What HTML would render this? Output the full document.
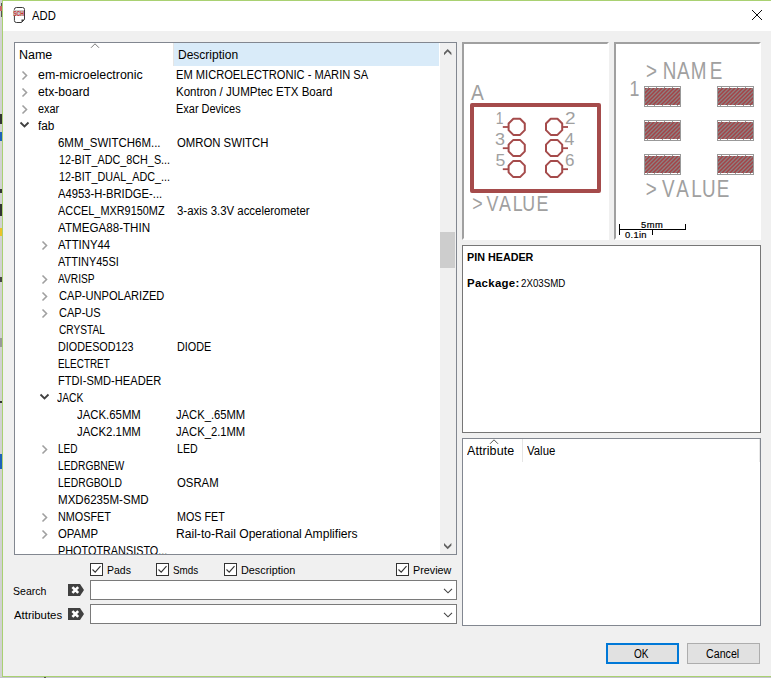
<!DOCTYPE html>
<html><head><meta charset="utf-8"><title>ADD</title>
<style>
html,body{margin:0;padding:0}
body{width:771px;height:678px;overflow:hidden;position:relative;background:#f0f0f0;font-family:"Liberation Sans",sans-serif;color:#000}
div,span,svg{position:absolute;box-sizing:border-box}
.t{white-space:pre;line-height:16px;font-size:12px;transform-origin:0 0}
.s11{font-size:11px} .s9{font-size:9px;-webkit-text-stroke:0.2px #000} .b{font-weight:bold}
.a{display:block;overflow:visible}
#strip{left:0;top:0;width:2px;height:678px;background:#d2d2d2}
#gl{left:2px;top:0;width:1px;height:677px;background:#a9d172}
#gt{left:2px;top:0;width:769px;height:1px;background:#a9d172}
#gb{left:2px;top:676px;width:769px;height:1px;background:#a9d172}
#sh{left:0;top:677px;width:771px;height:1px;background:#c4c4cc}
#title{left:3px;top:1px;width:768px;height:30px;background:#fff}
#tree{left:14px;top:42px;width:443px;height:513px;border:1px solid #828790;background:#fff;overflow:hidden}
#hl{left:174px;top:43px;width:265px;height:23px;background:#d9ebf9}
#hsep{left:173px;top:43px;width:1px;height:23px;background:#e5e5e5}
#sb{left:440px;top:43px;width:16px;height:511px;background:#f0f0f0}
#thumb{left:440px;top:232px;width:15px;height:36px;background:#cdcdcd}
.frame{top:42px;width:147px;height:198px;background:#fff;border-top:2px solid #a0a0a0;border-left:2px solid #a0a0a0;border-right:2px solid #fff;border-bottom:2px solid #fff}
#desc{left:462px;top:245px;width:299px;height:188px;background:#fff;border:1px solid #767676}
#attr{left:462px;top:438px;width:299px;height:188px;background:#fff;border:1px solid #828790}
#asep{left:522px;top:439px;width:1px;height:23px;background:#e5e5e5}
#asep2{left:759px;top:439px;width:1px;height:23px;background:#e8e8e8}
.cb{width:13px;height:13px;border:1px solid #333;background:#fff}
.cb svg{left:0;top:0}
.combo{left:90px;width:367px;height:20px;border:1px solid #7a7a7a;background:#fff}
.btn{top:643px;width:73px;height:21px;background:#e1e1e1;border:1px solid #adadad}
#ok{left:606px;border:2px solid #0078d7}
#cancel{left:687px}
</style></head><body>
<div id="strip"></div>
<div id="title"></div>
<div id="gt"></div><div id="gl"></div><div id="gb"></div><div id="sh"></div><div style="left:44px;top:677px;width:2px;height:1px;background:#555"></div>
<svg class="a" style="left:0;top:0" width="3" height="678" viewBox="0 0 3 678">
<rect x="1" y="3" width="1" height="14" fill="#555"/><rect x="0" y="6" width="2" height="5" fill="#c66"/>
<rect x="0" y="114" width="2" height="10" fill="#333"/><rect x="0" y="132" width="2" height="9" fill="#1c62b9"/>
<rect x="0" y="189" width="2" height="4" fill="#333"/><rect x="0" y="204" width="2" height="12" fill="#333"/>
<rect x="0" y="228" width="2" height="8" fill="#ecc22a"/><rect x="0" y="277" width="2" height="5" fill="#444"/>
<rect x="0" y="338" width="2" height="9" fill="#999"/><rect x="0" y="401" width="2" height="2" fill="#333"/>
<rect x="0" y="454" width="2" height="15" fill="#1c62b9"/>
<rect x="2" y="0" width="1" height="677" fill="#a9d172"/>
</svg>
<svg class="a" style="left:12px;top:5px" width="16" height="20" viewBox="0 0 16 20">
<path d="M4.4 2.5 H10.5 Q12.5 2.5 12.5 4.5 V14.5 L9.5 17.5 H4.4 Q2.4 17.5 2.4 15.5 V4.5 Q2.4 2.5 4.4 2.5 Z" fill="#fff" stroke="#3a3a3a" stroke-width="1"/>
<path d="M12.5 14.5 H9.5 V17.5 Z" fill="#3a3a3a"/>
<rect x="1" y="5" width="11" height="6" fill="#c8c8c8"/>
<text x="1.2" y="10.7" font-family="Liberation Sans, sans-serif" font-size="7" font-weight="bold" fill="#cc3333" textLength="10.6" lengthAdjust="spacingAndGlyphs">SCH</text>
</svg>
<svg class="a" style="left:751px;top:9px" width="12" height="12" viewBox="0 0 12 12"><path d="M1 1 L11 11 M11 1 L1 11" stroke="#000" stroke-width="0.95" fill="none"/></svg>

<div id="tree"></div>
<div id="hl"></div><div id="hsep"></div>
<svg class="a" style="left:90px;top:43px" width="10" height="6" viewBox="0 0 10 6"><path d="M1 4.8 L5 0.8 L9 4.8" fill="none" stroke="#7a7a7a" stroke-width="1"/></svg>
<div id="sb"></div><div id="thumb"></div>
<svg class="a" style="left:443.7px;top:48.8px" width="8" height="7" viewBox="0 0 8 7"><path d="M3.7 0 L7.4 3.7 V6.2 L3.7 2.5 L0 6.2 V3.7 Z" fill="#606060"/></svg>
<svg class="a" style="left:443.9px;top:542.8px" width="8" height="7" viewBox="0 0 8 7"><path d="M3.7 6.2 L7.4 2.5 V0 L3.7 3.7 L0 0 V2.5 Z" fill="#606060"/></svg>
<svg class="a" style="left:20.0px;top:69.5px" width="9" height="11" viewBox="0 0 9 11"><path d="M2.5 1.5 L6.5 5.5 L2.5 9.5" fill="none" stroke="#a0a0a0" stroke-width="1.6"/></svg><svg class="a" style="left:20.0px;top:86.5px" width="9" height="11" viewBox="0 0 9 11"><path d="M2.5 1.5 L6.5 5.5 L2.5 9.5" fill="none" stroke="#a0a0a0" stroke-width="1.6"/></svg><svg class="a" style="left:20.0px;top:103.5px" width="9" height="11" viewBox="0 0 9 11"><path d="M2.5 1.5 L6.5 5.5 L2.5 9.5" fill="none" stroke="#a0a0a0" stroke-width="1.6"/></svg><svg class="a" style="left:19.0px;top:119.5px" width="11" height="9" viewBox="0 0 11 9"><path d="M1.5 2.5 L5.5 6.5 L9.5 2.5" fill="none" stroke="#404040" stroke-width="1.8"/></svg><svg class="a" style="left:40.0px;top:239.5px" width="9" height="11" viewBox="0 0 9 11"><path d="M2.5 1.5 L6.5 5.5 L2.5 9.5" fill="none" stroke="#a0a0a0" stroke-width="1.6"/></svg><svg class="a" style="left:40.0px;top:273.5px" width="9" height="11" viewBox="0 0 9 11"><path d="M2.5 1.5 L6.5 5.5 L2.5 9.5" fill="none" stroke="#a0a0a0" stroke-width="1.6"/></svg><svg class="a" style="left:40.0px;top:290.5px" width="9" height="11" viewBox="0 0 9 11"><path d="M2.5 1.5 L6.5 5.5 L2.5 9.5" fill="none" stroke="#a0a0a0" stroke-width="1.6"/></svg><svg class="a" style="left:40.0px;top:307.5px" width="9" height="11" viewBox="0 0 9 11"><path d="M2.5 1.5 L6.5 5.5 L2.5 9.5" fill="none" stroke="#a0a0a0" stroke-width="1.6"/></svg><svg class="a" style="left:39.0px;top:391.5px" width="11" height="9" viewBox="0 0 11 9"><path d="M1.5 2.5 L5.5 6.5 L9.5 2.5" fill="none" stroke="#404040" stroke-width="1.8"/></svg><svg class="a" style="left:40.0px;top:443.5px" width="9" height="11" viewBox="0 0 9 11"><path d="M2.5 1.5 L6.5 5.5 L2.5 9.5" fill="none" stroke="#a0a0a0" stroke-width="1.6"/></svg><svg class="a" style="left:40.0px;top:511.5px" width="9" height="11" viewBox="0 0 9 11"><path d="M2.5 1.5 L6.5 5.5 L2.5 9.5" fill="none" stroke="#a0a0a0" stroke-width="1.6"/></svg><svg class="a" style="left:40.0px;top:528.5px" width="9" height="11" viewBox="0 0 9 11"><path d="M2.5 1.5 L6.5 5.5 L2.5 9.5" fill="none" stroke="#a0a0a0" stroke-width="1.6"/></svg>

<div class="frame" style="left:462px"></div>
<div class="frame" style="left:614px"></div>
<svg class="a" style="left:0;top:0" width="771" height="678" viewBox="0 0 771 678">
<defs><pattern id="hatch" width="4" height="4" patternUnits="userSpaceOnUse"><rect width="4" height="4" fill="#8b8182"/><path d="M-1 1 L1 -1 M-1 5 L5 -1 M3 5 L5 3" stroke="#a54246" stroke-width="1.5"/></pattern></defs>
<rect x="472" y="105" width="127" height="86" fill="none" stroke="#a54b4b" stroke-width="4" stroke-linejoin="round"/>
<polygon points="520.06,118.70 524.80,123.44 524.80,130.16 520.06,134.90 513.34,134.90 508.60,130.16 508.60,123.44 513.34,118.70" fill="none" stroke="#a54b4b" stroke-width="2" stroke-linejoin="round"/><path d="M502.8 127.0H508" stroke="#a54b4b" stroke-width="1.8"/><polygon points="557.46,118.70 562.20,123.44 562.20,130.16 557.46,134.90 550.74,134.90 546.00,130.16 546.00,123.44 550.74,118.70" fill="none" stroke="#a54b4b" stroke-width="2" stroke-linejoin="round"/><path d="M563 127.0H568" stroke="#a54b4b" stroke-width="1.8"/><polygon points="520.06,139.90 524.80,144.64 524.80,151.36 520.06,156.10 513.34,156.10 508.60,151.36 508.60,144.64 513.34,139.90" fill="none" stroke="#a54b4b" stroke-width="2" stroke-linejoin="round"/><path d="M502.8 148.2H508" stroke="#a54b4b" stroke-width="1.8"/><polygon points="557.46,139.90 562.20,144.64 562.20,151.36 557.46,156.10 550.74,156.10 546.00,151.36 546.00,144.64 550.74,139.90" fill="none" stroke="#a54b4b" stroke-width="2" stroke-linejoin="round"/><path d="M563 148.2H568" stroke="#a54b4b" stroke-width="1.8"/><polygon points="520.06,160.90 524.80,165.64 524.80,172.36 520.06,177.10 513.34,177.10 508.60,172.36 508.60,165.64 513.34,160.90" fill="none" stroke="#a54b4b" stroke-width="2" stroke-linejoin="round"/><path d="M502.8 169.2H508" stroke="#a54b4b" stroke-width="1.8"/><polygon points="557.46,160.90 562.20,165.64 562.20,172.36 557.46,177.10 550.74,177.10 546.00,172.36 546.00,165.64 550.74,160.90" fill="none" stroke="#a54b4b" stroke-width="2" stroke-linejoin="round"/><path d="M563 169.2H568" stroke="#a54b4b" stroke-width="1.8"/>
<g font-family="Liberation Sans, sans-serif" fill="#a0a0a0">
<text transform="scale(0.89,1)" x="529.17" y="99.6" font-size="21.6">A</text><text transform="scale(0.84,1)" x="562.17 579.07 594.13 610.40 621.82 638.74" y="211.4" font-size="21.2">&gt;VALUE</text><text transform="scale(0.82,1)" x="604.56" y="123.6" font-size="17">1</text><text transform="scale(1.06,1)" x="467.09" y="144.6" font-size="17">3</text><text transform="scale(1.04,1)" x="476.34" y="165.7" font-size="17">5</text><text transform="scale(1.12,1)" x="504.41" y="123.6" font-size="17">2</text><text transform="scale(1.04,1)" x="542.78" y="144.6" font-size="17">4</text><text transform="scale(1.0,1)" x="565.04" y="165.7" font-size="17">6</text><text transform="scale(0.82,1)" x="787.77 808.24 825.56 842.26 865.55" y="78.9" font-size="23">&gt;NAME</text><text transform="scale(0.82,1)" x="787.65 807.34 824.83 842.99 856.15 873.97" y="197.4" font-size="23">&gt;VALUE</text><text transform="scale(0.79,1)" x="796.89" y="95.6" font-size="22.5">1</text>
</g>
<g transform="translate(644,86)"><rect x="0" y="0" width="37" height="21" fill="#999"/><rect x="1" y="1" width="35" height="19" fill="#fff"/><rect x="1" y="2" width="35" height="17" fill="url(#hatch)"/><path d="M4.5 1v1M12.5 1v1M20.5 1v1M28.5 1v1M3.5 19v1M10.5 19v1M18.5 19v1M26.5 19v1M33.5 19v1" stroke="#999" stroke-width="1"/></g><g transform="translate(717,86)"><rect x="0" y="0" width="37" height="21" fill="#999"/><rect x="1" y="1" width="35" height="19" fill="#fff"/><rect x="1" y="2" width="35" height="17" fill="url(#hatch)"/><path d="M4.5 1v1M12.5 1v1M20.5 1v1M28.5 1v1M3.5 19v1M10.5 19v1M18.5 19v1M26.5 19v1M33.5 19v1" stroke="#999" stroke-width="1"/></g><g transform="translate(644,120)"><rect x="0" y="0" width="37" height="21" fill="#999"/><rect x="1" y="1" width="35" height="19" fill="#fff"/><rect x="1" y="2" width="35" height="17" fill="url(#hatch)"/><path d="M4.5 1v1M12.5 1v1M20.5 1v1M28.5 1v1M3.5 19v1M10.5 19v1M18.5 19v1M26.5 19v1M33.5 19v1" stroke="#999" stroke-width="1"/></g><g transform="translate(717,120)"><rect x="0" y="0" width="37" height="21" fill="#999"/><rect x="1" y="1" width="35" height="19" fill="#fff"/><rect x="1" y="2" width="35" height="17" fill="url(#hatch)"/><path d="M4.5 1v1M12.5 1v1M20.5 1v1M28.5 1v1M3.5 19v1M10.5 19v1M18.5 19v1M26.5 19v1M33.5 19v1" stroke="#999" stroke-width="1"/></g><g transform="translate(644,154)"><rect x="0" y="0" width="37" height="21" fill="#999"/><rect x="1" y="1" width="35" height="19" fill="#fff"/><rect x="1" y="2" width="35" height="17" fill="url(#hatch)"/><path d="M4.5 1v1M12.5 1v1M20.5 1v1M28.5 1v1M3.5 19v1M10.5 19v1M18.5 19v1M26.5 19v1M33.5 19v1" stroke="#999" stroke-width="1"/></g><g transform="translate(717,154)"><rect x="0" y="0" width="37" height="21" fill="#999"/><rect x="1" y="1" width="35" height="19" fill="#fff"/><rect x="1" y="2" width="35" height="17" fill="url(#hatch)"/><path d="M4.5 1v1M12.5 1v1M20.5 1v1M28.5 1v1M3.5 19v1M10.5 19v1M18.5 19v1M26.5 19v1M33.5 19v1" stroke="#999" stroke-width="1"/></g>
<path d="M619.5 224V235M619 229.5H686M685.5 224V230M652.5 229V235" stroke="#000" stroke-width="1" fill="none"/>
</svg>

<div id="desc"></div>
<div id="attr"></div><div id="asep"></div><div id="asep2"></div>
<svg class="a" style="left:489px;top:439px" width="10" height="6" viewBox="0 0 10 6"><path d="M1 4.8 L5 0.8 L9 4.8" fill="none" stroke="#555" stroke-width="1"/></svg>

<div class="cb" style="left:90px;top:563px"><svg width="11" height="11" viewBox="0 0 11 11"><path d="M1.5 5.5 L4.2 8.2 L9.5 2.2" fill="none" stroke="#333" stroke-width="1.1"/></svg></div><div class="cb" style="left:156px;top:563px"><svg width="11" height="11" viewBox="0 0 11 11"><path d="M1.5 5.5 L4.2 8.2 L9.5 2.2" fill="none" stroke="#333" stroke-width="1.1"/></svg></div><div class="cb" style="left:224px;top:563px"><svg width="11" height="11" viewBox="0 0 11 11"><path d="M1.5 5.5 L4.2 8.2 L9.5 2.2" fill="none" stroke="#333" stroke-width="1.1"/></svg></div><div class="cb" style="left:396px;top:563px"><svg width="11" height="11" viewBox="0 0 11 11"><path d="M1.5 5.5 L4.2 8.2 L9.5 2.2" fill="none" stroke="#333" stroke-width="1.1"/></svg></div>
<svg class="a" style="left:68px;top:584px" width="16" height="12" viewBox="0 0 16 12"><path d="M0 0 H12 L16 6 L12 12 H0 Z" fill="#404040"/><path d="M4.4 3.1 L10.2 8.9 M10.2 3.1 L4.4 8.9" stroke="#fff" stroke-width="2.6" stroke-linecap="butt"/></svg><svg class="a" style="left:68px;top:608px" width="16" height="12" viewBox="0 0 16 12"><path d="M0 0 H12 L16 6 L12 12 H0 Z" fill="#404040"/><path d="M4.4 3.1 L10.2 8.9 M10.2 3.1 L4.4 8.9" stroke="#fff" stroke-width="2.6" stroke-linecap="butt"/></svg>
<div class="combo" style="top:580px"><svg class="a" style="left:352px;top:7px" width="10" height="6" viewBox="0 0 10 6"><path d="M1 0.8 L5 4.8 L9 0.8" fill="none" stroke="#444" stroke-width="1.1"/></svg></div><div class="combo" style="top:604px"><svg class="a" style="left:352px;top:7px" width="10" height="6" viewBox="0 0 10 6"><path d="M1 0.8 L5 4.8 L9 0.8" fill="none" stroke="#444" stroke-width="1.1"/></svg></div>
<div class="btn" id="ok"></div><div class="btn" id="cancel"></div>
<span class="t s12" style="left:32.30px;top:7.84px;transform:scaleX(0.9374)">ADD</span><span class="t s12" style="left:18.56px;top:46.84px;transform:scaleX(1.0393)">Name</span><span class="t s12" style="left:177.70px;top:46.84px;transform:scaleX(1.0009)">Description</span><span class="t s12" style="left:37.88px;top:66.84px;transform:scaleX(1.0328)">em-microelectronic</span><span class="t s12" style="left:37.89px;top:83.84px;transform:scaleX(1.0162)">etx-board</span><span class="t s12" style="left:37.95px;top:100.84px;transform:scaleX(0.9055)">exar</span><span class="t s12" style="left:38.40px;top:117.84px;transform:scaleX(0.9846)">fab</span><span class="t s12" style="left:57.72px;top:134.84px;transform:scaleX(0.9551)">6MM_SWITCH6M...</span><span class="t s12" style="left:58.52px;top:151.84px;transform:scaleX(0.9004)">12-BIT_ADC_8CH_S...</span><span class="t s12" style="left:58.52px;top:168.84px;transform:scaleX(0.9004)">12-BIT_DUAL_ADC_...</span><span class="t s12" style="left:58.20px;top:185.84px;transform:scaleX(0.9351)">A4953-H-BRIDGE-...</span><span class="t s12" style="left:58.20px;top:202.84px;transform:scaleX(0.9077)">ACCEL_MXR9150MZ</span><span class="t s12" style="left:58.20px;top:219.84px;transform:scaleX(0.9687)">ATMEGA88-THIN</span><span class="t s12" style="left:58.20px;top:236.84px;transform:scaleX(0.9461)">ATTINY44</span><span class="t s12" style="left:58.20px;top:253.84px;transform:scaleX(0.9145)">ATTINY45SI</span><span class="t s12" style="left:58.20px;top:270.84px;transform:scaleX(0.8494)">AVRISP</span><span class="t s12" style="left:58.54px;top:287.84px;transform:scaleX(0.9239)">CAP-UNPOLARIZED</span><span class="t s12" style="left:58.54px;top:304.84px;transform:scaleX(0.9198)">CAP-US</span><span class="t s12" style="left:58.58px;top:321.84px;transform:scaleX(0.8449)">CRYSTAL</span><span class="t s12" style="left:57.70px;top:338.84px;transform:scaleX(0.8982)">DIODESOD123</span><span class="t s12" style="left:57.77px;top:355.84px;transform:scaleX(0.8260)">ELECTRET</span><span class="t s12" style="left:57.67px;top:372.84px;transform:scaleX(0.9267)">FTDI-SMD-HEADER</span><span class="t s12" style="left:57.29px;top:389.84px;transform:scaleX(0.8595)">JACK</span><span class="t s12" style="left:77.46px;top:406.84px;transform:scaleX(0.9479)">JACK.65MM</span><span class="t s12" style="left:77.46px;top:423.84px;transform:scaleX(0.9479)">JACK2.1MM</span><span class="t s12" style="left:57.76px;top:440.84px;transform:scaleX(0.8368)">LED</span><span class="t s12" style="left:57.74px;top:457.84px;transform:scaleX(0.8577)">LEDRGBNEW</span><span class="t s12" style="left:57.74px;top:474.84px;transform:scaleX(0.8634)">LEDRGBOLD</span><span class="t s12" style="left:57.64px;top:491.84px;transform:scaleX(0.9643)">MXD6235M-SMD</span><span class="t s12" style="left:57.70px;top:508.84px;transform:scaleX(0.9026)">NMOSFET</span><span class="t s12" style="left:58.13px;top:525.84px;transform:scaleX(0.9455)">OPAMP</span><span class="t s12" style="left:57.70px;top:542.84px;transform:scaleX(0.9044);clip-path:inset(0 0 4.84px 0)">PHOTOTRANSISTO...</span><span class="t s12" style="left:176.47px;top:66.84px;transform:scaleX(0.9270)">EM MICROELECTRONIC - MARIN SA</span><span class="t s12" style="left:176.44px;top:83.84px;transform:scaleX(0.9615)">Kontron / JUMPtec ETX Board</span><span class="t s12" style="left:176.49px;top:100.84px;transform:scaleX(0.9141)">Exar Devices</span><span class="t s12" style="left:176.93px;top:134.84px;transform:scaleX(0.9449)">OMRON SWITCH</span><span class="t s12" style="left:176.92px;top:202.84px;transform:scaleX(0.9514)">3-axis 3.3V accelerometer</span><span class="t s12" style="left:176.50px;top:338.84px;transform:scaleX(0.9014)">DIODE</span><span class="t s12" style="left:176.37px;top:406.84px;transform:scaleX(0.9347)">JACK_.65MM</span><span class="t s12" style="left:176.37px;top:423.84px;transform:scaleX(0.9347)">JACK_2.1MM</span><span class="t s12" style="left:176.52px;top:440.84px;transform:scaleX(0.8828)">LED</span><span class="t s12" style="left:176.93px;top:474.84px;transform:scaleX(0.9459)">OSRAM</span><span class="t s12" style="left:176.50px;top:508.84px;transform:scaleX(0.8962)">MOS FET</span><span class="t s12" style="left:176.39px;top:525.84px;transform:scaleX(1.0087)">Rail-to-Rail Operational Amplifiers</span><span class="t s11" style="left:106.98px;top:562.19px;transform:scaleX(0.9542)">Pads</span><span class="t s11" style="left:173.15px;top:562.19px;transform:scaleX(0.8991)">Smds</span><span class="t s11" style="left:240.76px;top:562.19px;transform:scaleX(0.9850)">Description</span><span class="t s11" style="left:412.77px;top:562.19px;transform:scaleX(0.9792)">Preview</span><span class="t s11" style="left:13.32px;top:583.19px;transform:scaleX(0.9570)">Search</span><span class="t s11" style="left:13.80px;top:607.19px;transform:scaleX(1.0348)">Attributes</span><span class="t s11 b" style="left:466.77px;top:249.19px;transform:scaleX(0.9783)">PIN HEADER</span><span class="t s11 b" style="left:466.72px;top:275.19px;transform:scaleX(1.0400);letter-spacing:0.280px">Package:</span><span class="t s11" style="left:521.06px;top:275.19px;transform:scaleX(0.8832)">2X03SMD</span><span class="t s12" style="left:467.30px;top:442.84px;transform:scaleX(1.0400);letter-spacing:0.082px">Attribute</span><span class="t s12" style="left:527.20px;top:442.84px;transform:scaleX(0.9504)">Value</span><span class="t s12" style="left:633.98px;top:645.84px;transform:scaleX(0.8358)">OK</span><span class="t s12" style="left:705.96px;top:645.84px;transform:scaleX(0.8889)">Cancel</span><span class="t s9" style="left:640.68px;top:216.88px;transform:scaleX(1.0400);letter-spacing:0.500px">5mm</span><span class="t s9" style="left:624.94px;top:226.88px;transform:scaleX(1.0400);letter-spacing:0.288px">0.1in</span>
</body></html>
